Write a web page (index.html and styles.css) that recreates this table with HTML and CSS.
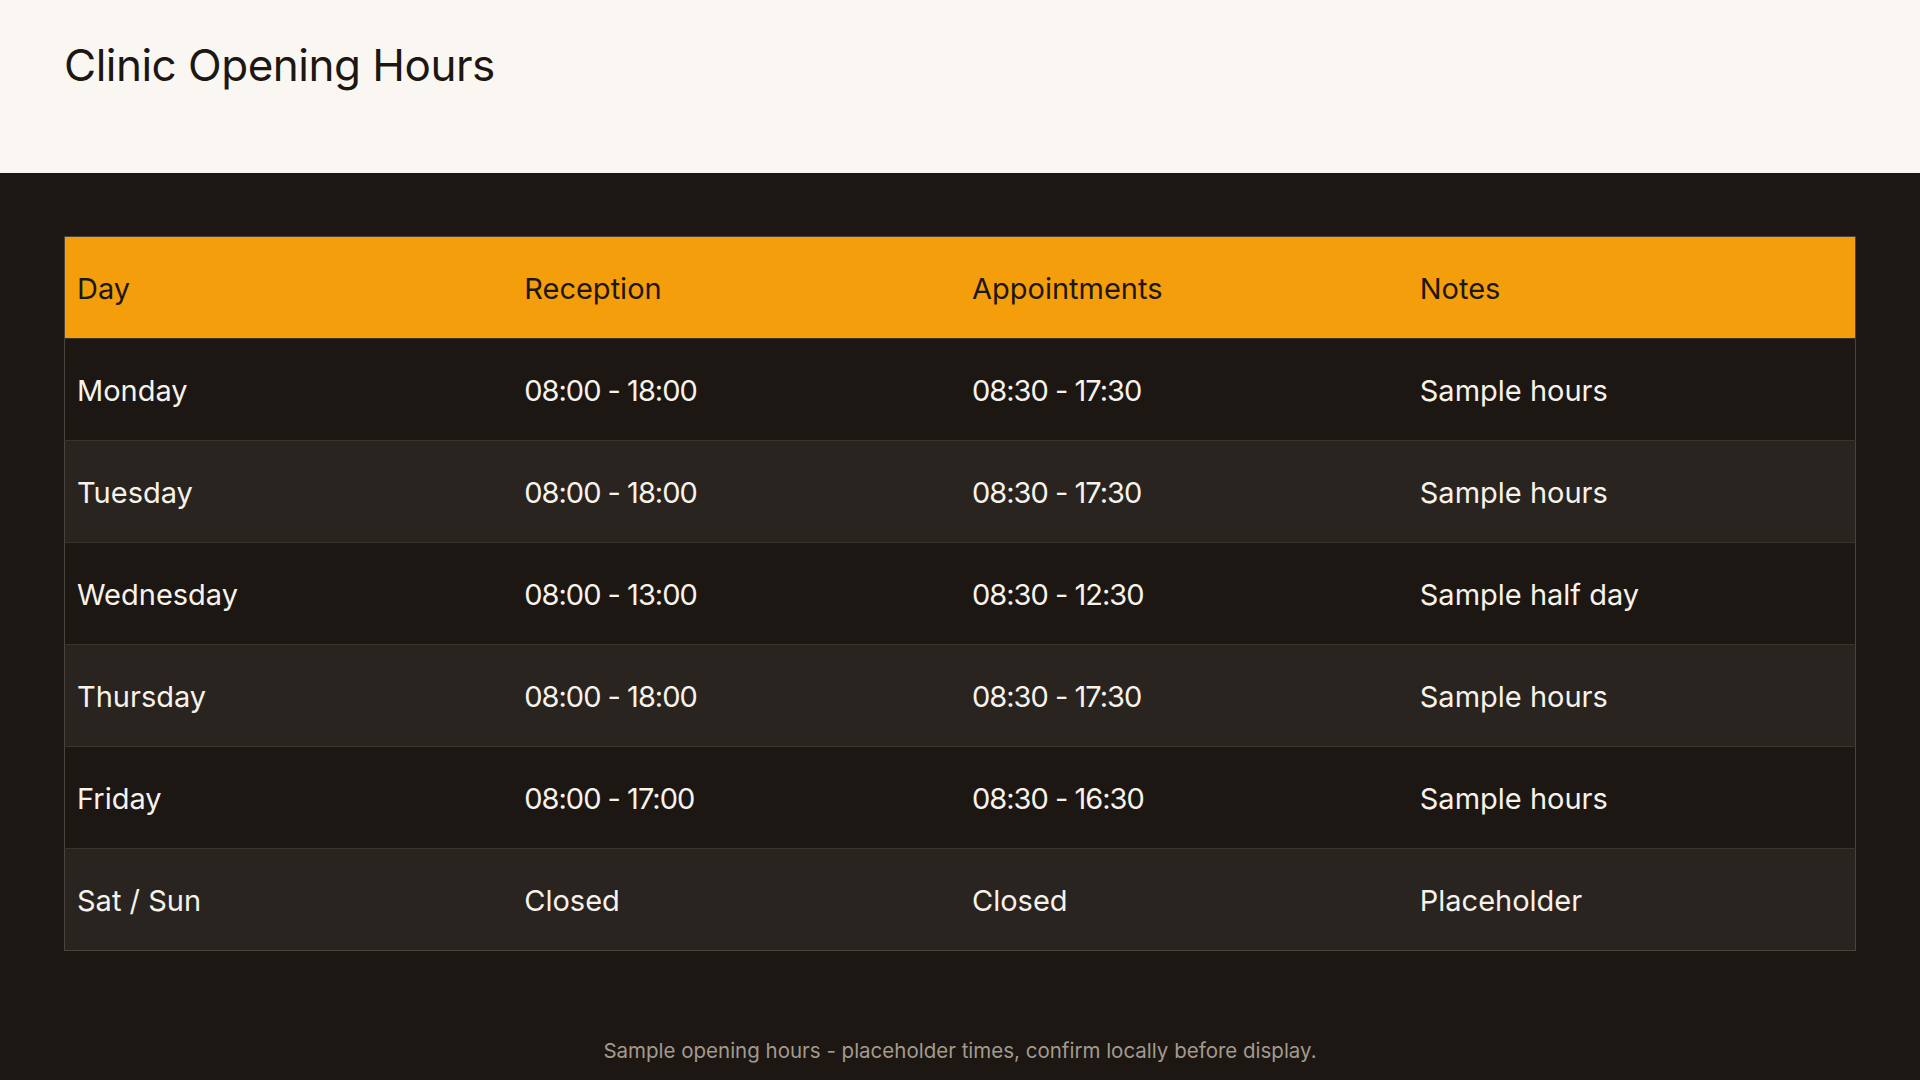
FILE: index.html
```html
<!DOCTYPE html>
<html lang="en">
<head>
<meta charset="utf-8">
<title>Clinic Opening Hours</title>
<link rel="stylesheet" href="styles.css">
</head>
<body>
<header class="top">
  <h1 class="title">Clinic Opening Hours</h1>
</header>
<main class="content">
  <table class="hours">
    <thead>
      <tr><th>Day</th><th>Reception</th><th>Appointments</th><th>Notes</th></tr>
    </thead>
    <tbody>
      <tr><td>Monday</td><td class="time">08:00 - 18:00</td><td class="time">08:30 - 17:30</td><td>Sample hours</td></tr>
      <tr><td>Tuesday</td><td class="time">08:00 - 18:00</td><td class="time">08:30 - 17:30</td><td>Sample hours</td></tr>
      <tr><td>Wednesday</td><td class="time">08:00 - 13:00</td><td class="time">08:30 - 12:30</td><td>Sample half day</td></tr>
      <tr><td>Thursday</td><td class="time">08:00 - 18:00</td><td class="time">08:30 - 17:30</td><td>Sample hours</td></tr>
      <tr><td>Friday</td><td class="time">08:00 - 17:00</td><td class="time">08:30 - 16:30</td><td>Sample hours</td></tr>
      <tr><td>Sat / Sun</td><td>Closed</td><td>Closed</td><td>Placeholder</td></tr>
    </tbody>
  </table>
  <p class="note">Sample opening hours - placeholder times, confirm locally before display.</p>
</main>
</body>
</html>
```
FILE: styles.css
```css
html, body {
  margin: 0;
  padding: 0;
}
body {
  width: 1920px;
  height: 1080px;
  overflow: hidden;
  background: #1c1713;
  font-family: Inter, "Liberation Sans", Arial, sans-serif;
  display: flex;
  flex-direction: column;
}
.top {
  background: #faf7f2;
  height: 173px;
  box-sizing: border-box;
  padding: 39px 64px 0;
}
.title {
  margin: 0;
  font-size: 44px;
  font-weight: 400;
  line-height: 1.2;
  color: #1c1713;
  letter-spacing: -0.5px;
}
.content {
  flex: 1;
  padding: 63px 64px 0;
  display: flex;
  flex-direction: column;
}
.hours {
  width: 100%;
  border-collapse: collapse;
  table-layout: fixed;
  border: 1px solid #4a443e;
}
.hours th,
.hours td {
  text-align: left;
  font-size: 29px;
  font-weight: 400;
  line-height: 34px;
  padding: 35px 12px 32px 12px;
}
.hours th {
  background: #f59e0b;
  color: #1c1713;
}
.hours td {
  color: #f7f2ea;
  border-top: 1px solid #3a342e;
}
.hours td.time {
  letter-spacing: -1px;
}
.hours tbody tr:nth-child(odd) td {
  background: #1c1713;
}
.hours tbody tr:nth-child(even) td {
  background: #29241f;
}
.note {
  margin: 86px 0 0;
  text-align: center;
  font-size: 20.5px;
  line-height: 28px;
  color: #a39a8e;
}
```
